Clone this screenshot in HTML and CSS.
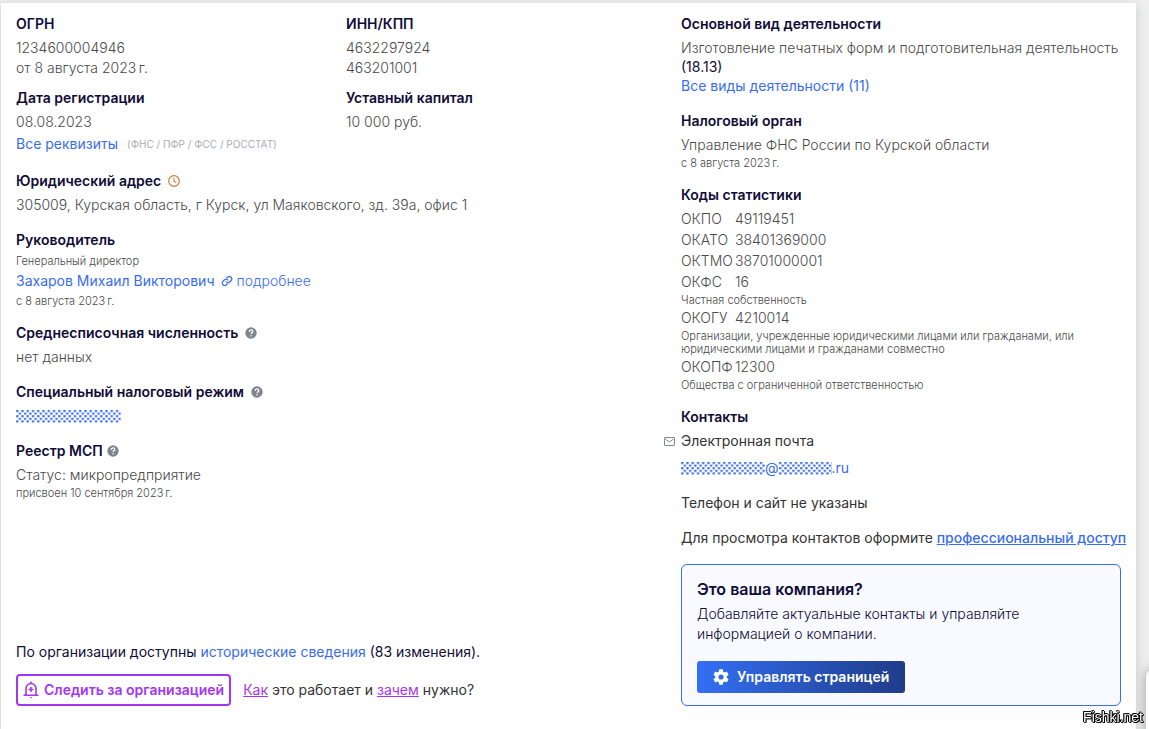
FILE: index.html
```html
<!DOCTYPE html>
<html lang="ru">
<head>
<meta charset="utf-8">
<title>Сведения об организации</title>
<link rel="stylesheet" href="styles.css">
</head>
<body>
<svg class="defs" aria-hidden="true">
  <defs>
    <pattern id="dots" width="5.25" height="5.2" patternUnits="userSpaceOnUse">
      <rect x="0.2" y="0" width="2.1" height="2.1" fill="#2f62f0"/>
      <rect x="2.8" y="2.6" width="2.1" height="2.1" fill="#2f62f0"/>
    </pattern>
    <symbol id="help" viewBox="0 0 12 12">
      <circle cx="6" cy="6" r="5.7" fill="#7e858f"/>
      <path d="M4.3 4.7C4.3 3.5 5 2.9 6.1 2.9S7.8 3.6 7.8 4.5C7.8 5.7 6.1 5.6 6.1 7.1" fill="none" stroke="#fff" stroke-width="1.3"/>
      <circle cx="6.1" cy="8.8" r="0.8" fill="#fff"/>
    </symbol>
  </defs>
</svg>
<main class="card">
  <div class="left">
    <div class="facts">
      <div class="pair">
        <section>
          <h2>ОГРН</h2>
          <p>1234600004946</p>
          <p>от 8 августа 2023&thinsp;г.</p>
        </section>
        <section>
          <h2>ИНН/КПП</h2>
          <p>4632297924</p>
          <p>463201001</p>
        </section>
        <section>
          <h2>Дата регистрации</h2>
          <p>08.08.2023</p>
          <p class="requisites"><a href="#">Все реквизиты</a> <span class="funds">(ФНС / ПФР / ФСС / РОССТАТ)</span></p>
        </section>
        <section>
          <h2>Уставный капитал</h2>
          <p>10 000 руб.</p>
        </section>
      </div>
      <section>
        <h2>Юридический адрес
          <svg class="icon" viewBox="0 0 12 12" fill="none" stroke="#cf7f3b"><circle cx="6" cy="6" r="5.3" stroke-width="1.2"/><path d="M6 2.8V6.3L8.4 7.4" stroke-width="1.1"/></svg>
        </h2>
        <p>305009, Курская область, г Курск, ул Маяковского, зд. 39а, офис 1</p>
      </section>
      <section class="head">
        <h2>Руководитель</h2>
        <p class="note">Генеральный директор</p>
        <p class="person"><a href="#">Захаров Михаил Викторович</a>
          <a class="more" href="#"><svg class="chain" viewBox="0 0 24 24" fill="none" stroke="currentColor" stroke-width="2.4" stroke-linecap="round"><path d="M10 13.5a5 5 0 0 0 7.5.5l3-3a5 5 0 0 0-7-7L11.500 6M14 10.500a5 5 0 0 0-7.500-.5l-3 3a5 5 0 0 0 7 7L12.500 18"/></svg>подробнее</a></p>
        <p class="note">с 8 августа 2023&thinsp;г.</p>
      </section>
      <section>
        <h2>Среднесписочная численность <svg class="icon"><use href="#help"/></svg></h2>
        <p>нет данных</p>
      </section>
      <section>
        <h2>Специальный налоговый режим <svg class="icon"><use href="#help"/></svg></h2>
        <p class="masked"><svg class="mask"><rect width="100%" height="100%" fill="url(#dots)"/></svg></p>
      </section>
      <section>
        <h2 class="tight">Реестр МСП <svg class="icon"><use href="#help"/></svg></h2>
        <p>Статус: микропредприятие</p>
        <p class="note">присвоен 10 сентября 2023&thinsp;г.</p>
      </section>
    </div>
    <footer>
      <p class="history">По организации доступны <a href="#">исторические сведения</a> (83 изменения).</p>
      <div class="follow">
        <button class="watch" type="button"><svg class="bell" viewBox="0 0 16 18" fill="none" stroke="currentColor" stroke-width="1.6"><path d="M3 14V7.500a5 5 0 0 1 10 0V14M0.500 14.200h15M8 0.500V2.500M8 6v5M5.500 8.500h5"/><path d="M6.300 16.300h3.400L8 17.500z" fill="currentColor" stroke="none"/></svg>Следить за организацией</button>
        <p><a href="#">Как</a> это работает и <a href="#">зачем</a> нужно?</p>
      </div>
    </footer>
  </div>
  <div class="right">
    <section class="activity">
      <h2>Основной вид деятельности</h2>
      <p>Изготовление печатных форм и подготовительная деятельность <span class="code">(18.13)</span></p>
      <p><a href="#">Все виды деятельности (11)</a></p>
    </section>
    <section class="tax">
      <h2>Налоговый орган</h2>
      <p>Управление ФНС России по Курской области</p>
      <p class="note">с 8 августа 2023&thinsp;г.</p>
    </section>
    <section class="stats">
      <h2>Коды статистики</h2>
      <dl>
        <dt>ОКПО</dt><dd>49119451</dd>
        <dt>ОКАТО</dt><dd>38401369000</dd>
        <dt>ОКТМО</dt><dd>38701000001</dd>
        <dt>ОКФС</dt><dd>16</dd>
        <dd class="about">Частная собственность</dd>
        <dt>ОКОГУ</dt><dd>4210014</dd>
        <dd class="about">Организации, учрежденные юридическими лицами или гражданами, или юридическими лицами и гражданами совместно</dd>
        <dt>ОКОПФ</dt><dd>12300</dd>
        <dd class="about">Общества с ограниченной ответственностью</dd>
      </dl>
    </section>
    <section class="contacts">
      <h2>Контакты</h2>
      <p class="mail"><svg class="envelope" viewBox="0 0 11 9" fill="none" stroke="#81858c"><rect x="0.500" y="0.500" width="10" height="8" rx="0.500"/><path d="M1.500 2L5.500 5 9.500 2"/></svg>Электронная почта</p>
      <p class="address"><a href="#"><svg class="mask user"><rect width="100%" height="100%" fill="url(#dots)"/></svg>@<svg class="mask domain"><rect width="100%" height="100%" fill="url(#dots)"/></svg>.ru</a></p>
      <p class="phone">Телефон и сайт не указаны</p>
      <p class="access">Для просмотра контактов оформите <a class="pro" href="#">профессиональный доступ</a></p>
    </section>
    <aside class="owner">
      <h3>Это ваша компания?</h3>
      <p>Добавляйте актуальные контакты и управляйте информацией о компании.</p>
      <button class="manage" type="button"><svg class="gear" viewBox="2 2 20 20" fill="currentColor"><path d="M19.140 12.940c.04-.3.060-.61.060-.94s-.02-.64-.07-.94l2.030-1.580a.49.49 0 0 0 .12-.61l-1.920-3.320a.49.49 0 0 0-.59-.22l-2.390.96a7 7 0 0 0-1.620-.94l-.36-2.540a.48.48 0 0 0-.48-.41h-3.840a.47.47 0 0 0-.47.41l-.36 2.540c-.59.24-1.130.57-1.620.94l-2.390-.96a.47.47 0 0 0-.59.220L2.740 8.870c-.12.210-.08.470.12.610l2.030 1.580c-.05.300-.09.630-.09.940s.02.640.070.940l-2.030 1.580a.49.49 0 0 0-.12.610l1.920 3.320c.12.220.370.290.590.220l2.390-.96c.5.380 1.030.700 1.620.940l.36 2.540c.05.240.240.410.480.410h3.840c.240 0 .440-.170.470-.410l.36-2.540c.59-.24 1.130-.56 1.620-.94l2.390.96c.220.080.470 0 .590-.22l1.920-3.320a.47.47 0 0 0-.12-.61zM12 15.200a3.200 3.200 0 1 1 0-6.400 3.200 3.200 0 0 1 0 6.400z"/></svg>Управлять страницей</button>
    </aside>
  </div>
</main>
<div class="widget"></div>
<div class="watermark">Fishki.net</div>
</body>
</html>
```
FILE: styles.css
```css
* { box-sizing: border-box; }

html, body { height: 100%; }

body {
  margin: 0;
  padding: 3px 13px 0 1px;
  display: flex;
  overflow: hidden;
  background: #efefef;
  color: #100c38;
  font: 400 14px/20px Inter, "Noto Sans", sans-serif;
}

h2, h3, p, dl, dd { margin: 0; }

a { color: #3a6cf0; text-decoration: none; }

button { font: inherit; cursor: pointer; }

.defs { position: absolute; width: 0; height: 0; }

.card {
  flex: 1;
  display: grid;
  grid-template-columns: minmax(0, 3fr) minmax(0, 2fr);
  column-gap: 5px;
  padding: 11px 15px 23px;
  background: #fff;
  box-shadow: 0 3px 10px rgba(40, 60, 80, 0.2);
}

.left { display: flex; flex-direction: column; justify-content: space-between; }

section { margin-bottom: 15px; }

section p { color: #4a4a4a; font-weight: 300; }

section a { font-weight: 400; }

h2 {
  display: flex;
  align-items: center;
  gap: 7px;
  margin-bottom: 4px;
  font-size: 14px;
  line-height: 20px;
  font-weight: 600;
}

h2.tight { gap: 4px; }

.icon { width: 12px; height: 12px; }

.pair { display: grid; grid-template-columns: 1fr 1fr; }

.pair section { margin-bottom: 10px; }

.pair section:nth-child(n+3) { margin-bottom: 17px; }

.requisites { display: flex; align-items: center; gap: 9px; margin-top: 2px; }

.requisites .funds { color: #a9abb0; font-size: 10px; font-weight: 400; }

section .note { font-size: 11px; line-height: 16px; }

.head { margin-bottom: 13px; }

.head h2 { margin-bottom: 2px; }

.head .note { line-height: 18px; }

.person { display: flex; gap: 7px; margin: 1px 0; }

.more { display: flex; align-items: center; gap: 3px; font-weight: 300; }

.chain { width: 12px; height: 12px; }

.mask { width: 105px; height: 13px; }

.masked { display: flex; align-items: center; height: 20px; }

.history { margin-bottom: 12px; }

.follow { display: flex; align-items: center; gap: 12px; color: #333; }

.follow a { color: #a336f0; text-decoration: underline; }

.watch {
  display: flex;
  align-items: center;
  gap: 5px;
  height: 32px;
  padding: 0 5px;
  border: 2px solid #a336f0;
  border-radius: 4px;
  background: #fff;
  color: #a336f0;
  font-weight: 600;
}

.bell { width: 16px; height: 18px; }

.activity { margin-bottom: 16px; }

.activity p { line-height: 19px; }

.activity .code { color: #100c38; font-weight: 400; }

.tax { margin-bottom: 14px; }

.stats h2 { margin-bottom: 3px; }

.stats dl {
  display: grid;
  grid-template-columns: 54px 1fr;
  line-height: 21px;
  color: #4a4a4a;
  font-weight: 300;
}

.stats .about {
  grid-column: 1 / -1;
  margin-top: 2px;
  font-size: 11px;
  line-height: 13px;
}

.contacts { margin-bottom: 16px; }

.contacts p { color: #333; font-weight: 400; }

.contacts .mail { display: flex; align-items: center; gap: 6px; margin-left: -17px; }

.envelope { width: 11px; height: 9px; }

.address { margin: 7px 0 15px; }

.address a { display: flex; align-items: center; }

.user { width: 84px; }

.domain { width: 53px; }

.phone { margin-bottom: 15px; }

.access { white-space: nowrap; }

.access .pro { font-weight: 500; text-decoration: underline; }

.owner {
  padding: 12px 15px;
  border: 1px solid #3a6cf0;
  border-radius: 6px;
  background: #f9faff;
}

.owner h3 { margin-bottom: 3px; font-size: 16px; line-height: 24px; font-weight: 600; }

.owner p { max-width: 340px; margin-bottom: 17px; font-weight: 300; }

.manage {
  display: flex;
  align-items: center;
  gap: 8px;
  height: 32px;
  padding: 0 16px;
  border: 0;
  border-radius: 3px;
  background: linear-gradient(90deg, #336ff5, #1f3c88);
  color: #fff;
  font-weight: 600;
}

.gear { width: 16px; height: 16px; }

.widget {
  position: fixed;
  right: -37px;
  bottom: -10px;
  width: 40px;
  height: 70px;
  border-radius: 8px;
  background: #fff;
  box-shadow: 0 0 12px rgba(0, 0, 0, 0.35);
}

.watermark {
  position: fixed;
  right: 6px;
  bottom: 2px;
  color: #fff;
  font: 14px/20px "Liberation Sans", sans-serif;
  text-shadow: 1px 0 #000, -1px 0 #000, 0 1px #000, 0 -1px #000, 1px 1px #000, -1px -1px #000;
}
```
